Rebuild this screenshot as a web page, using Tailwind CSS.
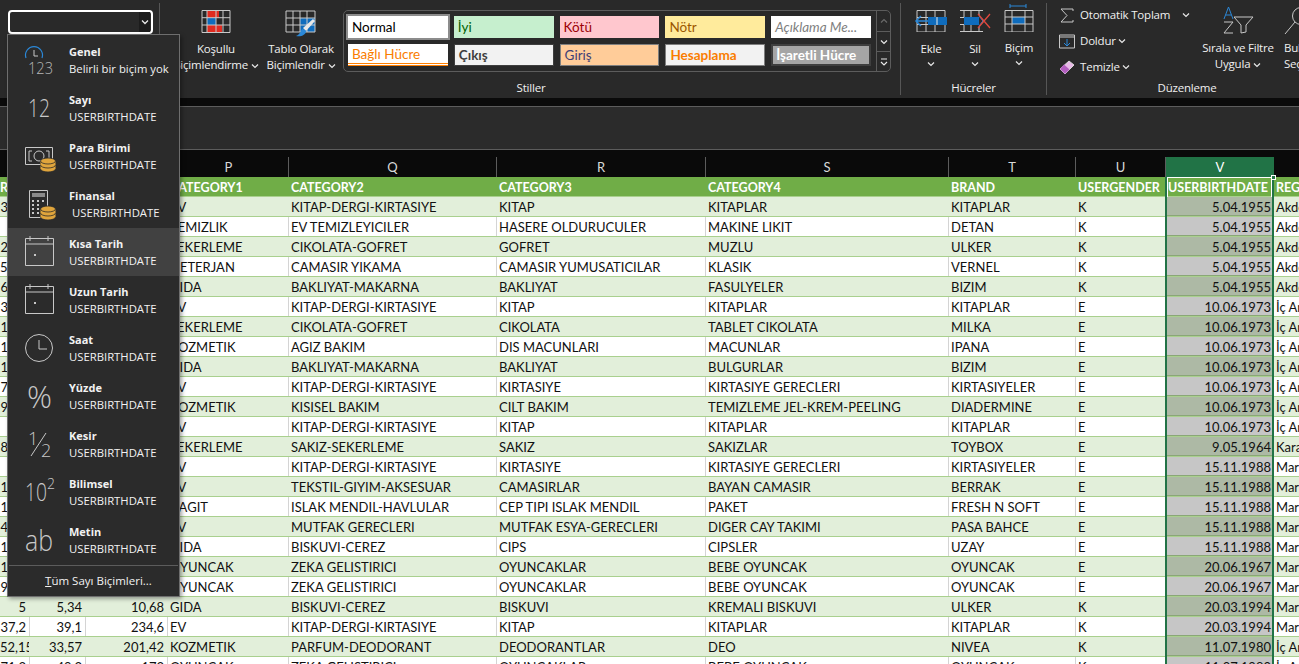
<!DOCTYPE html>
<html lang="tr">

<head>
  <meta charset="UTF-8">
  <meta name="viewport" content="width=device-width, initial-scale=1.0">
  <title>Excel - Sayı Biçimi</title>
  <script src="https://cdn.jsdelivr.net/npm/@tailwindcss/browser@4"></script>
</head>

<body class="bg-[#292929]">
  <div class="relative w-[1299px] h-[664px] overflow-hidden flex flex-col font-['Open_Sans',sans-serif]">

    <!-- Ribbon -->
    <div class="flex h-[98px] shrink-0 bg-[#292929] text-[#f0f0f0] text-[11.5px] tracking-[-.2px] leading-4">
      <div class="w-[160px] shrink-0 pl-2 pt-[7px] border-r border-[#565656] my-[3px]">
        <div class="w-[145px] h-[24px] border-2 border-white rounded-[4px] flex justify-end pr-px">
          <div class="w-[11px] h-full bg-[#1c1c1c] flex items-center justify-center">
            <svg class="w-2 h-2" viewBox="0 0 8 8" fill="none" stroke="#e8e8e8" stroke-width="1.3"><path d="M1 2.5 4 5.5 7 2.5"/></svg>
          </div>
        </div>
      </div>

      <!-- Stiller -->
      <div class="w-[741px] shrink-0 flex flex-col border-r border-[#565656] my-[3px]">
        <div class="flex">
          <div class="w-[86px] ml-[13px] flex flex-col items-center pt-[7px]">
            <svg class="w-[30px] h-[24px]" viewBox="0 0 30 24" fill="none">
              <rect x="6" y="1" width="12" height="7" fill="#e02b20"/>
              <rect x="6" y="8" width="9" height="7" fill="#0f6cbd"/>
              <rect x="6" y="15" width="15" height="7" fill="#e02b20"/>
              <path d="M1 .5H29V22.5H1ZM1 7.7H29M1 15H29M6 .5V22.5M15 .5V22.5M22 .5V22.5" stroke="#c8c8c8"/>
            </svg>
            <div class="mt-[7px]">Koşullu</div>
            <div class="whitespace-nowrap">Biçimlendirme <svg class="inline w-2 h-2" viewBox="0 0 8 8" fill="none" stroke="#e8e8e8" stroke-width="1.2"><path d="M1 2.5 4 5.5 7 2.5"/></svg></div>
          </div>
          <div class="w-[84px] flex flex-col items-center pt-[7px]">
            <svg class="w-[32px] h-[28px]" viewBox="0 0 32 28" fill="none">
              <rect x="15" y="8" width="15" height="14" fill="#0f6cbd"/>
              <path d="M1 1H30V22H1ZM1 8H30M1 15H30M8 1V22M15 1V22M22 1V22" stroke="#c8c8c8"/>
              <path d="M30 11 21 21 18 18 28 9Z" fill="#e8e8e8"/>
              <path d="M18 19C15 20 16 24 11 26 16 27 21 25 21 21Z" fill="#2b88d8"/>
            </svg>
            <div class="mt-[3px]">Tablo Olarak</div>
            <div class="whitespace-nowrap">Biçimlendir <svg class="inline w-2 h-2" viewBox="0 0 8 8" fill="none" stroke="#e8e8e8" stroke-width="1.2"><path d="M1 2.5 4 5.5 7 2.5"/></svg></div>
          </div>
          <div class="mt-[7px] w-[548px] h-[62px] flex border border-[#5c5c5c] rounded-[5px] font-['Lato',sans-serif] text-[13.5px] tracking-normal leading-[22px]">
            <div class="flex-1 grid grid-cols-5 content-start gap-x-[6px] gap-y-[6px] pl-[4px] pr-[5px] pt-[5px]">
              <div class="h-[22px] bg-white text-black pl-1 outline-2 outline-[#8c8c8c] outline-offset-0">Normal</div>
              <div class="h-[22px] bg-[#c6efce] text-[#006100] pl-1">İyi</div>
              <div class="h-[22px] bg-[#ffc7ce] text-[#9c0006] pl-1">Kötü</div>
              <div class="h-[22px] bg-[#ffeb9c] text-[#9c5700] pl-1">Nötr</div>
              <div class="h-[22px] bg-white text-[#7f7f7f] italic pl-1 whitespace-nowrap overflow-hidden">Açıklama Me...</div>
              <div class="h-[22px] bg-white text-[#fa7d00] pl-1 border-b-[3px] border-double border-[#ff8001] leading-[21px]">Bağlı Hücre</div>
              <div class="h-[22px] bg-[#f2f2f2] text-[#3f3f3f] font-bold pl-1 border border-[#3f3f3f] leading-[20px]">Çıkış</div>
              <div class="h-[22px] bg-[#ffcc99] text-[#3f3f76] pl-1 border border-[#7f7f7f] leading-[20px]">Giriş</div>
              <div class="h-[22px] bg-[#f2f2f2] text-[#fa7d00] font-bold pl-1 border border-[#7f7f7f] leading-[20px]">Hesaplama</div>
              <div class="h-[22px] bg-[#a5a5a5] text-white font-bold pl-[3px] border-2 border-double border-[#3f3f3f] leading-[18px] whitespace-nowrap overflow-hidden">İşaretli Hücre</div>
            </div>
            <div class="w-[14px] flex flex-col border-l border-[#5c5c5c]">
              <div class="h-[21px] flex items-center justify-center border-b border-[#5c5c5c]">
                <svg class="w-2 h-2" viewBox="0 0 8 8" fill="none" stroke="#6a6a6a" stroke-width="1.2"><path d="M1 5.5 4 2.5 7 5.5"/></svg>
              </div>
              <div class="h-[20px] flex items-center justify-center border-b border-[#5c5c5c]">
                <svg class="w-2 h-2" viewBox="0 0 8 8" fill="none" stroke="#e8e8e8" stroke-width="1.2"><path d="M1 2.5 4 5.5 7 2.5"/></svg>
              </div>
              <div class="flex-1 flex items-center justify-center">
                <svg class="w-2 h-2" viewBox="0 0 8 8" fill="none" stroke="#e8e8e8" stroke-width="1.2"><path d="M1 1H7M1 4 4 7 7 4"/></svg>
              </div>
            </div>
          </div>
        </div>
        <div class="mt-auto -mb-[1px] h-4 pl-[2px] text-center">Stiller</div>
      </div>

      <!-- Hücreler -->
      <div class="w-[146px] shrink-0 flex flex-col border-r border-[#565656] my-[3px]">
        <div class="flex pl-[8px]">
          <div class="w-[44px] flex flex-col items-center">
            <svg class="w-[34px] h-[29px]" viewBox="0 0 34 29" fill="none">
              <path d="M3 7.5H31V29H3ZM3 14.5H31M3 21.5H31M12 7.5V29M21 7.5V29" stroke="#c8c8c8"/>
              <rect x="14" y="14" width="19" height="8" fill="#0f6cbd"/>
              <path d="M23 14V22" stroke="#e8e8e8"/>
              <path d="M14 18H2M7 13 2 18 7 23" stroke="#2b88d8" stroke-width="1.5"/>
            </svg>
            <div class="mt-[9px]">Ekle</div>
            <svg class="w-2 h-2 mt-[3px]" viewBox="0 0 8 8" fill="none" stroke="#e8e8e8" stroke-width="1.2"><path d="M1 2.5 4 5.5 7 2.5"/></svg>
          </div>
          <div class="w-[44px] flex flex-col items-center">
            <svg class="w-[32px] h-[29px]" viewBox="0 0 32 29" fill="none">
              <path d="M1 7.5H24M1 14.5H5M1 21.5H5M1 28.5H24M5 7.5V14M5 22V28.5M12 7.5V14M12 22V28.5M20 7.5V12M20 24V28.5" stroke="#c8c8c8"/>
              <rect x="5" y="14" width="15" height="8" fill="#0f6cbd"/>
              <path d="M20 13 24 18 20 23" stroke="#2b88d8"/>
              <path d="M19 11 31 25M31 11 19 25" stroke="#e0493e" stroke-width="1.3"/>
            </svg>
            <div class="mt-[9px]">Sil</div>
            <svg class="w-2 h-2 mt-[3px]" viewBox="0 0 8 8" fill="none" stroke="#e8e8e8" stroke-width="1.2"><path d="M1 2.5 4 5.5 7 2.5"/></svg>
          </div>
          <div class="w-[44px] flex flex-col items-center">
            <svg class="w-[30px] h-[29px]" viewBox="0 0 30 29" fill="none">
              <path d="M6 3H22M6 1V5M22 1V5" stroke="#2b88d8"/>
              <rect x="8" y="14" width="13" height="7" fill="#0f6cbd"/>
              <path d="M1 7.5H29V29H1ZM1 14H29M1 21H29M8 7.5V29M21 7.5V29" stroke="#c8c8c8"/>
            </svg>
            <div class="mt-[8px]">Biçim</div>
            <svg class="w-2 h-2 mt-[3px]" viewBox="0 0 8 8" fill="none" stroke="#e8e8e8" stroke-width="1.2"><path d="M1 2.5 4 5.5 7 2.5"/></svg>
          </div>
        </div>
        <div class="mt-auto -mb-[1px] h-4 text-center">Hücreler</div>
      </div>

      <!-- Düzenleme -->
      <div class="w-[280px] shrink-0 flex flex-col my-[3px]">
        <div class="flex">
          <div class="w-[141px] ml-[12px] flex flex-col pt-[4px]">
            <div class="flex items-center h-4">
              <svg class="w-[16px] h-[15px]" viewBox="0 0 16 15" fill="none" stroke="#c8c8c8"><path d="M14 3V1H2L8 7.5 2 14H14V12"/></svg>
              <span class="ml-[5px]">Otomatik Toplam</span>
              <svg class="ml-3 w-2 h-2" viewBox="0 0 8 8" fill="none" stroke="#e8e8e8" stroke-width="1.2"><path d="M1 2.5 4 5.5 7 2.5"/></svg>
            </div>
            <div class="flex items-center h-4 mt-[10px]">
              <svg class="w-[16px] h-[15px]" viewBox="0 0 16 15" fill="none"><path d="M.5 1H15.5V14H.5ZM.5 3H15.5" stroke="#c8c8c8"/><path d="M8 5V12M5 9 8 12 11 9" stroke="#2b88d8"/></svg>
              <span class="ml-[5px]">Doldur</span>
              <svg class="ml-[2px] w-2 h-2" viewBox="0 0 8 8" fill="none" stroke="#e8e8e8" stroke-width="1.2"><path d="M1 2.5 4 5.5 7 2.5"/></svg>
            </div>
            <div class="flex items-center h-4 mt-[10px]">
              <svg class="w-[16px] h-[15px]" viewBox="0 0 16 15" fill="none"><path d="M1 9 10 1 15 5 6 14Z" fill="#e8b9e8" stroke="#d9d9d9"/><path d="M1 9 5 4.5 10.5 9.5 6 14Z" fill="#b45fc0"/></svg>
              <span class="ml-[5px]">Temizle</span>
              <svg class="ml-[2px] w-2 h-2" viewBox="0 0 8 8" fill="none" stroke="#e8e8e8" stroke-width="1.2"><path d="M1 2.5 4 5.5 7 2.5"/></svg>
            </div>
          </div>
          <div class="w-[76px] flex flex-col items-center pt-[3px] whitespace-nowrap">
            <svg class="w-[32px] h-[28px]" viewBox="0 0 32 28" fill="none">
              <path d="M2 13 6.5 1 11 13M4 9H9" stroke="#2b88d8"/>
              <path d="M2 16H11L2 27H11" stroke="#c8c8c8"/>
              <path d="M12 11H31L24 19V26L19 27V19Z" stroke="#c8c8c8"/>
            </svg>
            <div class="mt-[6px]">Sırala ve Filtre</div>
            <div>Uygula <svg class="inline w-2 h-2" viewBox="0 0 8 8" fill="none" stroke="#e8e8e8" stroke-width="1.2"><path d="M1 2.5 4 5.5 7 2.5"/></svg></div>
          </div>
          <div class="ml-[8px] flex flex-col pt-[3px] whitespace-nowrap">
            <svg class="w-[30px] h-[29px]" viewBox="0 0 30 29" fill="none" stroke="#c8c8c8"><circle cx="17" cy="10" r="8.5"/><path d="M11 16 1 28"/></svg>
            <div class="mt-[5px]">Bul ve</div>
            <div>Seç</div>
          </div>
        </div>
        <div class="mt-auto -mb-[1px] h-4 text-center">Düzenleme</div>
      </div>
    </div>

    <div class="h-[8px] shrink-0 bg-[#0a0a0a]"></div>
    <!-- Formula bar -->
    <div class="h-[44px] shrink-0 bg-[#2b2b2b] border-y border-[#5c5c5c]"></div>

    <!-- Column letters -->
    <div class="h-[27px] shrink-0 bg-[#0a0a0a] pt-[7px] grid grid-cols-[169px_120px_208px_209px_243px_127px_90px_108px_25px] text-[#d8d8d8] text-[13px] leading-5 text-center font-['Lato',sans-serif]">
      <div></div>
      <div class="border-r border-[#5c5c5c]">P</div>
      <div class="border-r border-[#5c5c5c]">Q</div>
      <div class="border-r border-[#5c5c5c]">R</div>
      <div class="border-r border-[#5c5c5c]">S</div>
      <div class="border-r border-[#5c5c5c]">T</div>
      <div class="border-r border-[#5c5c5c]">U</div>
      <div class="bg-[#217346] text-white">V</div>
      <div></div>
    </div>

    <!-- Sheet -->
    <div class="relative flex-1 bg-white font-['Lato',sans-serif] text-[13px] leading-[21px] text-[#111]">
      <div id="sheet"></div>
      <!-- selected column frame -->
      <div class="absolute left-[1165px] top-0 w-[109px] h-full border-x-2 border-[#217346]"></div>
      <div class="absolute left-[1167px] top-0 w-[105px] h-[20px] border border-b-0 border-white"></div>
      <div class="absolute left-[1271px] -top-[2px] w-[5px] h-[5px] bg-[#217346] border border-white"></div>
    </div>

    <!-- Number format menu -->
    <div class="absolute left-[7px] top-[34px] w-[173px] h-[563px] bg-[#2b2b2b] border border-[#6e6e6e] shadow-[2px_2px_4px_rgba(0,0,0,.35)] text-[#f2f2f2] text-[11.5px] leading-4">
      <div id="menu" class="pt-[1px]"></div>
      <div class="mt-[1px] border-t border-[#5c5c5c] mx-[1px] pt-[7px] pl-[10px] text-center">
        <span class="underline">T</span>üm Sayı Biçimleri...
      </div>
    </div>
  </div>

  <script>
    const K = 'KITAP-DERGI-KIRTASIYE';
    // col1, col2, col3, P, Q, R, S, T, U, V, region
    const rows = [
      ['3,95', '', '', 'EV', K, 'KITAP', 'KITAPLAR', 'KITAPLAR', 'K', '5.04.1955', 'Akdeniz'],
      ['', '', '', 'TEMIZLIK', 'EV TEMIZLEYICILER', 'HASERE OLDURUCULER', 'MAKINE LIKIT', 'DETAN', 'K', '5.04.1955', 'Akdeniz'],
      ['2,49', '', '', 'SEKERLEME', 'CIKOLATA-GOFRET', 'GOFRET', 'MUZLU', 'ULKER', 'K', '5.04.1955', 'Akdeniz'],
      ['52,15', '', '', 'DETERJAN', 'CAMASIR YIKAMA', 'CAMASIR YUMUSATICILAR', 'KLASIK', 'VERNEL', 'K', '5.04.1955', 'Akdeniz'],
      ['6,75', '', '', 'GIDA', 'BAKLIYAT-MAKARNA', 'BAKLIYAT', 'FASULYELER', 'BIZIM', 'K', '5.04.1955', 'Akdeniz'],
      ['3,75', '', '', 'EV', K, 'KITAP', 'KITAPLAR', 'KITAPLAR', 'E', '10.06.1973', 'İç Anadolu'],
      ['1,95', '', '', 'SEKERLEME', 'CIKOLATA-GOFRET', 'CIKOLATA', 'TABLET CIKOLATA', 'MILKA', 'E', '10.06.1973', 'İç Anadolu'],
      ['14,8', '', '', 'KOZMETIK', 'AGIZ BAKIM', 'DIS MACUNLARI', 'MACUNLAR', 'IPANA', 'E', '10.06.1973', 'İç Anadolu'],
      ['15,9', '', '', 'GIDA', 'BAKLIYAT-MAKARNA', 'BAKLIYAT', 'BULGURLAR', 'BIZIM', 'E', '10.06.1973', 'İç Anadolu'],
      ['70,5', '', '', 'EV', K, 'KIRTASIYE', 'KIRTASIYE GERECLERI', 'KIRTASIYELER', 'E', '10.06.1973', 'İç Anadolu'],
      ['9,45', '', '', 'KOZMETIK', 'KISISEL BAKIM', 'CILT BAKIM', 'TEMIZLEME JEL-KREM-PEELING', 'DIADERMINE', 'E', '10.06.1973', 'İç Anadolu'],
      ['', '', '', 'EV', K, 'KITAP', 'KITAPLAR', 'KITAPLAR', 'E', '10.06.1973', 'İç Anadolu'],
      ['8,15', '', '', 'SEKERLEME', 'SAKIZ-SEKERLEME', 'SAKIZ', 'SAKIZLAR', 'TOYBOX', 'E', '9.05.1964', 'Karadeniz'],
      ['', '', '', 'EV', K, 'KIRTASIYE', 'KIRTASIYE GERECLERI', 'KIRTASIYELER', 'E', '15.11.1988', 'Marmara'],
      ['1,25', '', '', 'EV', 'TEKSTIL-GIYIM-AKSESUAR', 'CAMASIRLAR', 'BAYAN CAMASIR', 'BERRAK', 'E', '15.11.1988', 'Marmara'],
      ['1,75', '', '', 'KAGIT', 'ISLAK MENDIL-HAVLULAR', 'CEP TIPI ISLAK MENDIL', 'PAKET', 'FRESH N SOFT', 'E', '15.11.1988', 'Marmara'],
      ['4,50', '', '', 'EV', 'MUTFAK GERECLERI', 'MUTFAK ESYA-GERECLERI', 'DIGER CAY TAKIMI', 'PASA BAHCE', 'E', '15.11.1988', 'Marmara'],
      ['13,2', '', '', 'GIDA', 'BISKUVI-CEREZ', 'CIPS', 'CIPSLER', 'UZAY', 'E', '15.11.1988', 'Marmara'],
      ['11,9', '', '', 'OYUNCAK', 'ZEKA GELISTIRICI', 'OYUNCAKLAR', 'BEBE OYUNCAK', 'OYUNCAK', 'E', '20.06.1967', 'Marmara'],
      ['97,5', '', '', 'OYUNCAK', 'ZEKA GELISTIRICI', 'OYUNCAKLAR', 'BEBE OYUNCAK', 'OYUNCAK', 'E', '20.06.1967', 'Marmara'],
      ['5', '5,34', '10,68', 'GIDA', 'BISKUVI-CEREZ', 'BISKUVI', 'KREMALI BISKUVI', 'ULKER', 'K', '20.03.1994', 'Marmara'],
      ['37,2', '39,1', '234,6', 'EV', K, 'KITAP', 'KITAPLAR', 'KITAPLAR', 'K', '20.03.1994', 'Marmara'],
      ['52,15', '33,57', '201,42', 'KOZMETIK', 'PARFUM-DEODORANT', 'DEODORANTLAR', 'DEO', 'NIVEA', 'K', '11.07.1980', 'İç Anadolu'],
      ['71,3', '49,3', '173', 'OYUNCAK', 'ZEKA GELISTIRICI', 'OYUNCAKLAR', 'BEBE OYUNCAK', 'OYUNCAK', 'K', '11.07.1980', 'İç Anadolu'],
    ];

    const gridCols = 'grid grid-cols-[30px_56px_82px_121px_208px_209px_243px_127px_90px_108px_25px] h-5';

    const header = ['R', '', '', 'CATEGORY1', 'CATEGORY2', 'CATEGORY3', 'CATEGORY4', 'BRAND', 'USERGENDER', 'USERBIRTHDATE', 'REGION'];
    const headerHtml = `<div class="${gridCols} bg-[#70ad47] text-white text-[12.5px] font-bold border-b border-[#a9d08e]">` +
      header.map((h, i) => `<div class="whitespace-nowrap overflow-hidden ${i === 0 ? '' : 'pl-[2px]'}">${h}</div>`).join('') + '</div>';

    const rowsHtml = rows.map((r, idx) => {
      const green = idx % 2 === 0;
      const cells = r.map((v, i) => {
        const align = i < 3 || i === 9 ? 'text-right pr-[3px]' : 'pl-[2px]';
        let bg = green ? 'border-r border-[#e2efda]' : 'border-r border-[#d4d4d4]';
        if (i === 8 || i === 10) bg = '';
        if (i === 9) bg = green ? 'bg-[#adb9a5] border-b border-[#8aa677]' : 'bg-[#c6c6c6] border-b border-[#8aa677]';
        return `<div class="whitespace-nowrap overflow-hidden ${align} ${bg}">${v}</div>`;
      }).join('');
      return `<div class="${gridCols} ${green ? 'bg-[#e2efda]' : 'bg-white'} border-b border-[#a9d08e]">${cells}</div>`;
    }).join('');

    document.getElementById('sheet').innerHTML = headerHtml + rowsHtml;

    const coins = (x, y) => `<g fill="#e0a53c" stroke="#2b2b2b" stroke-width=".8"><ellipse cx="${x}" cy="${y + 10}" rx="7.5" ry="3"/><rect x="${x - 7.5}" y="${y + 6}" width="15" height="4" stroke="none"/><ellipse cx="${x}" cy="${y + 6}" rx="7.5" ry="3"/><rect x="${x - 7.5}" y="${y + 2}" width="15" height="4" stroke="none"/><ellipse cx="${x}" cy="${y + 2}" rx="7.5" ry="3"/></g>`;
    const calendar = `<path d="M6.5 6.5H34.5V33.5H6.5ZM6.5 12H34.5M11 4V9M29 4V9" stroke="#c8c8c8"/><rect x="15" y="22" width="2" height="2" fill="#c8c8c8"/>`;

    const items = [
      ['Genel', 'Belirli bir biçim yok', `<path d="M7 18A8.5 8.5 0 1 1 23 18" stroke="#2b88d8" stroke-width="1.2"/><path d="M15 10V16H19" stroke="#c8c8c8"/><text x="9" y="34" font-size="17" textLength="25" lengthAdjust="spacingAndGlyphs" fill="#b8b8b8" class="font-['Open_Sans'] font-light">123</text>`],
      ['Sayı', 'USERBIRTHDATE', `<text x="9" y="29" font-size="25" textLength="22" lengthAdjust="spacingAndGlyphs" fill="#c8c8c8" class="font-['Open_Sans'] font-light">12</text>`],
      ['Para Birimi', 'USERBIRTHDATE', `<path d="M6.5 11.5H33.5V28.5H6.5Z" stroke="#c8c8c8"/><path d="M13 15H10V25H13M27 15H30V25H27" stroke="#c8c8c8"/><circle cx="20" cy="20" r="5" stroke="#c8c8c8"/>${coins(29, 23)}`],
      ['Finansal', 'USERBIRTHDATE', `<path d="M10.5 6.5H28.5V33.5H10.5Z" stroke="#c8c8c8"/><rect x="13" y="9" width="13" height="4" fill="#8a8a8a"/><path d="M13 17H15M18 17H20M23 17H25M13 21H15M18 21H20M13 25H15M18 25H20M13 29H15M18 29H20" stroke="#c8c8c8" stroke-width="2"/>${coins(29, 23)}`],
      ['Kısa Tarih', 'USERBIRTHDATE', calendar],
      ['Uzun Tarih', 'USERBIRTHDATE', calendar],
      ['Saat', 'USERBIRTHDATE', `<circle cx="20" cy="20" r="13.5" stroke="#c8c8c8"/><path d="M20 12V21H28" stroke="#c8c8c8"/>`],
      ['Yüzde', 'USERBIRTHDATE', `<text x="8" y="32" font-size="32" textLength="25" lengthAdjust="spacingAndGlyphs" fill="#c8c8c8" class="font-['Open_Sans'] font-light">%</text>`],
      ['Kesir', 'USERBIRTHDATE', `<text x="9" y="21" font-size="18" fill="#c8c8c8" class="font-['Open_Sans'] font-light">1</text><path d="M12 32 27 9" stroke="#c8c8c8"/><text x="22" y="33" font-size="18" fill="#c8c8c8" class="font-['Open_Sans'] font-light">2</text>`],
      ['Bilimsel', 'USERBIRTHDATE', `<text x="6" y="29" font-size="26" textLength="22" lengthAdjust="spacingAndGlyphs" fill="#c8c8c8" class="font-['Open_Sans'] font-light">10</text><text x="28" y="17" font-size="14" fill="#c8c8c8" class="font-['Open_Sans'] font-light">2</text>`],
      ['Metin', 'USERBIRTHDATE', `<text x="6" y="31" font-size="30" textLength="28" lengthAdjust="spacingAndGlyphs" fill="#c8c8c8" class="font-['Open_Sans'] font-light">ab</text>`],
    ];

    document.getElementById('menu').innerHTML = items.map(([title, sub, icon], i) => `
      <div class="h-12 flex items-center ${i === 4 ? 'bg-[#414141]' : ''}">
        <svg class="ml-[11px] w-10 h-10 shrink-0" viewBox="0 0 40 40" fill="none">${icon}</svg>
        <div class="ml-[10px] mt-[1px] whitespace-nowrap">
          <div class="font-bold text-[11px] leading-4">${title}</div>
          <div class="text-[11.3px] leading-4 mt-[1px] ${i === 3 ? 'pl-[3px]' : ''}">${sub}</div>
        </div>
      </div>
    `).join('');
  </script>
</body>

</html>
